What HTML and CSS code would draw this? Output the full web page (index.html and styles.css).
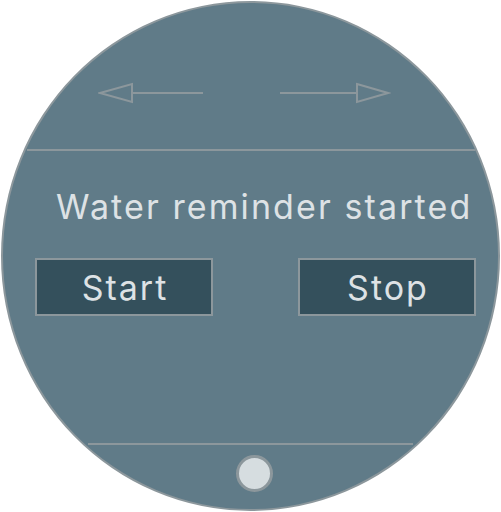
FILE: index.html
```html
<!DOCTYPE html>
<html>
<head>
<meta charset="utf-8">
<link rel="stylesheet" href="styles.css">
</head>
<body>
<div class="watch">
  <div class="nav">
    <svg class="arrow" width="110" height="24" viewBox="0 0 110 24">
      <path d="M34 12 H105" stroke="#8c979c" stroke-width="2" fill="none"/>
      <path d="M2 12 L34 3 L34 21 Z" stroke="#8c979c" stroke-width="2" fill="none" stroke-linejoin="miter"/>
    </svg>
    <svg class="arrow" width="114" height="24" viewBox="0 0 114 24">
      <path d="M3 12 H80" stroke="#8c979c" stroke-width="2" fill="none"/>
      <path d="M80 3 L111 12 L80 21 Z" stroke="#8c979c" stroke-width="2" fill="none"/>
    </svg>
  </div>
  <div class="divider top"></div>
  <div class="content">
    <p class="status">Water reminder started</p>
    <div class="buttons">
      <button class="btn">Start</button>
      <button class="btn">Stop</button>
    </div>
  </div>
  <div class="divider bottom"></div>
  <div class="footer">
    <span class="dot"></span>
  </div>
</div>
</body>
</html>
```

FILE: styles.css
```css
html, body {
  margin: 0;
  padding: 0;
  background: #ffffff;
}
body {
  padding: 1px 0 0 1px;
  font-family: Inter, "Liberation Sans", Arial, sans-serif;
}
.watch {
  box-sizing: border-box;
  width: 499px;
  height: 510px;
  border-radius: 50%;
  border: 2px solid #8c979c;
  background: #607b88;
  overflow: hidden;
  display: flex;
  flex-direction: column;
}
.nav {
  height: 146px;
  display: flex;
  justify-content: space-between;
  align-items: flex-start;
  padding: 78px 107px 0 95px;
  box-sizing: border-box;
}
.arrow {
  display: block;
}
.divider {
  height: 2px;
  background: #8c979c;
}
.divider.top {
  margin: 0 22px 0 24px;
}
.content {
  height: 292px;
  box-sizing: border-box;
  padding-top: 34px;
}
.status {
  margin: 0 0 0 53px;
  font-size: 34px;
  line-height: 44px;
  letter-spacing: 2.1px;
  color: #dde2e5;
  white-space: nowrap;
}
.buttons {
  display: flex;
  justify-content: space-between;
  margin: 29px 22px 0 32px;
}
.btn {
  box-sizing: border-box;
  width: 178px;
  height: 58px;
  background: #34505c;
  border: 2px solid #8c979c;
  color: #dde2e5;
  font-family: inherit;
  font-size: 34px;
  letter-spacing: 2px;
  padding: 0 0 0 2px;
}
.divider.bottom {
  margin: 0 85px 0 85px;
}
.footer {
  flex: 1;
  display: flex;
  justify-content: center;
  padding-top: 10px;
}
.dot {
  box-sizing: border-box;
  width: 37px;
  height: 37px;
  border-radius: 50%;
  background: #d6dde0;
  border: 3px solid #8c979c;
  margin-left: 8px;
}
```
